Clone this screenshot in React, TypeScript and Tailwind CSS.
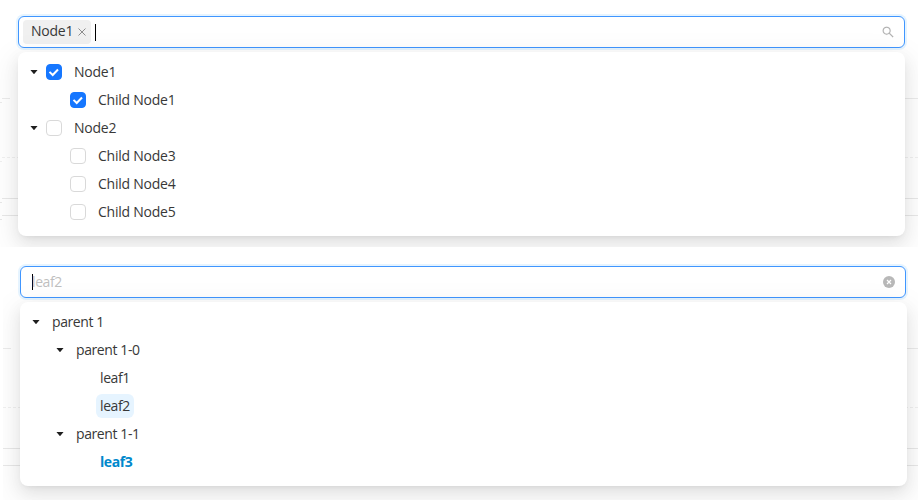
import type { ReactNode } from "react";
import clsx from "clsx";

function Caret() {
  return (
    <span className="flex w-6 h-6 items-center justify-center shrink-0">
      <svg width="10" height="10" viewBox="0 0 1024 1024" fill="#1f1f1f">
        <path d="M840.4 300H183.6c-19.7 0-30.7 20.8-18.5 35l328.4 380.8c9.4 10.9 27.5 10.9 37 0L858.900 335c12.200-14.200 1.200-35-18.500-35z" />
      </svg>
    </span>
  );
}

function Checkbox({ checked }: { checked: boolean }) {
  return (
    <span
      className={clsx(
        "flex w-4 h-4 mr-2 items-center justify-center rounded border shrink-0",
        checked ? "bg-[#1677ff] border-[#1677ff]" : "bg-white border-[#d9d9d9]"
      )}
    >
      {checked && (
        <svg width="12" height="12" viewBox="0 0 12 12" fill="none">
          <path d="M1.500 5.900L4.700 9L10 3.500" stroke="white" strokeWidth="2" />
        </svg>
      )}
    </span>
  );
}

type RowProps = {
  label: string;
  level?: number;
  open?: boolean;
  checked?: boolean;
  selected?: boolean;
  strong?: boolean;
};

const indents = ["pl-0", "pl-6", "pl-12"];

function TreeRow({ label, level = 0, open, checked, selected, strong }: RowProps) {
  return (
    <div className={clsx("flex h-6 items-center", indents[level])}>
      {open ? <Caret /> : <span className="w-6 shrink-0" />}
      {checked !== undefined && <Checkbox checked={checked} />}
      <span
        className={clsx(
          "h-6 px-1 rounded-md leading-6",
          selected && "bg-[#e6f4ff]",
          strong ? "font-bold text-[#0088cc]" : "text-[#383838]"
        )}
      >
        {label}
      </span>
    </div>
  );
}

function Dropdown({ children }: { children: ReactNode }) {
  return (
    <div className="relative flex flex-col gap-1 h-[184px] mt-1 px-1 py-2 rounded-lg bg-white shadow-[0_6px_16px_0_rgba(0,0,0,0.08),0_3px_6px_-4px_rgba(0,0,0,0.12),0_9px_28px_8px_rgba(0,0,0,0.05)]">
      {children}
    </div>
  );
}

/* Page rules that show behind the dropdown */
function Backdrop({ className }: { className?: string }) {
  return (
    <div className={clsx("[grid-area:1/1]", className)}>
      <div className="flex justify-between">
        <div className="w-2 border-t border-[#ebebeb]" />
        <div className="w-4 border-t border-[#ebebeb]" />
      </div>
      <div className="mt-[58px] border-t border-dashed border-[#f0f0f0]" />
      <div className="mt-10 border-t border-[#e8e8e8]" />
      <div className="mt-4 border-t border-[#e8e8e8]" />
    </div>
  );
}

export default function App() {
  return (
    <div className="w-[918px] h-[500px] overflow-hidden bg-white font-['Open_Sans','Noto_Sans',sans-serif] text-sm">
      {/* Checkable tree */}
      <section className="grid h-[247px] overflow-hidden tracking-[-0.24px]">
        <Backdrop className="w-0.5 mt-[102px] overflow-hidden" />
        <Backdrop className="ml-0.5 mt-[98px]" />
        <div className="[grid-area:1/1] pt-4 pl-[18px] pr-[13px]">
          <div className="flex h-8 items-center rounded-md border border-[#4096ff] bg-white pl-1 pr-2.5 shadow-[0_0_0_2px_rgba(5,145,255,0.1)]">
            <span className="flex w-[68px] h-6 items-center rounded bg-[#f0f0f0] pl-2 text-[#383838]">
              <span className="w-[46px] pb-0.5">Node1</span>
              <svg width="10" height="10" viewBox="0 0 10 10" fill="none" stroke="#8c8c8c">
                <path d="M1.500 1.500L8.500 8.500M8.500 1.500L1.500 8.500" />
              </svg>
            </span>
            <span className="ml-1 w-px h-[17px] bg-black" />
            <svg className="ml-auto" width="12" height="12" viewBox="64 64 896 896" fill="#b0b0b0" stroke="#b0b0b0" strokeWidth="12">
              <path d="M909.600 854.500L649.900 594.800C690.200 542.700 712 479 712 412c0-80.200-31.300-155.400-87.900-212.100-56.600-56.700-132-87.900-212.100-87.900s-155.500 31.300-212.100 87.900C143.200 256.500 112 331.800 112 412c0 80.100 31.300 155.500 87.900 212.100C256.500 680.800 331.800 712 412 712c67 0 130.600-21.800 182.700-62l259.700 259.600a8.200 8.200 0 0 0 11.600 0l43.600-43.500a8.200 8.200 0 0 0 0-11.600zM570.400 570.400C528 612.700 471.800 636 412 636s-116-23.300-158.400-65.600C211.300 528 188 471.800 188 412s23.300-116.100 65.600-158.400C296 211.300 352.200 188 412 188s116.100 23.200 158.400 65.600S636 352.200 636 412s-23.300 116.100-65.600 158.400z" />
            </svg>
          </div>
          <Dropdown>
            <TreeRow label="Node1" open checked />
            <TreeRow label="Child Node1" level={1} checked />
            <TreeRow label="Node2" open checked={false} />
            <TreeRow label="Child Node3" level={1} checked={false} />
            <TreeRow label="Child Node4" level={1} checked={false} />
            <TreeRow label="Child Node5" level={1} checked={false} />
          </Dropdown>
        </div>
      </section>

      {/* Single select tree */}
      <section className="grid h-[250px] mt-[3px] ml-[3px] overflow-hidden tracking-[-0.4px]">
        <Backdrop className="mt-[98px]" />
        <div className="[grid-area:1/1] pt-4 pl-[17px] pr-[11px]">
          <div className="flex h-8 mr-px items-center rounded-md border border-[#4096ff] bg-white px-[11px] shadow-[0_0_0_2px_rgba(5,145,255,0.1)]">
            <span className="w-px h-4 bg-black" />
            <span className="-ml-px text-[#bfbfbf]">leaf2</span>
            <svg className="ml-auto -mr-px" width="12" height="12" viewBox="0 0 12 12">
              <circle cx="6" cy="6" r="6" fill="#b8b8b8" />
              <path d="M4 4L8 8M8 4L4 8" stroke="white" strokeWidth="1.200" />
            </svg>
          </div>
          <Dropdown>
            <TreeRow label="parent 1" open />
            <TreeRow label="parent 1-0" level={1} open />
            <TreeRow label="leaf1" level={2} />
            <TreeRow label="leaf2" level={2} selected />
            <TreeRow label="parent 1-1" level={1} open />
            <TreeRow label="leaf3" level={2} strong />
          </Dropdown>
        </div>
      </section>
    </div>
  );
}
